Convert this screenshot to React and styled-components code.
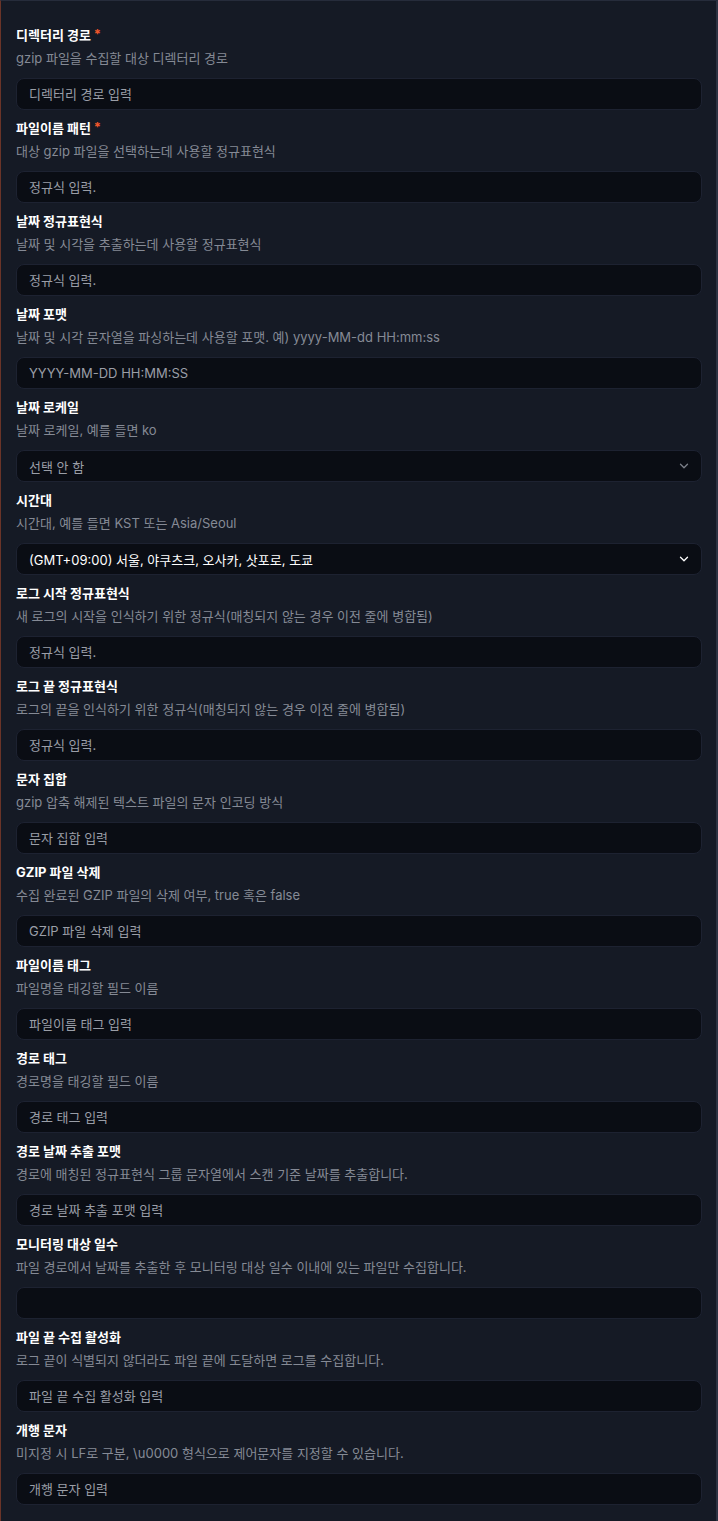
import { createGlobalStyle, styled } from "styled-components";
import { ChevronDown } from "lucide-react";

const fields = [
  { label: "디렉터리 경로", required: true, desc: "gzip 파일을 수집할 대상 디렉터리 경로", placeholder: "디렉터리 경로 입력" },
  { label: "파일이름 패턴", required: true, desc: "대상 gzip 파일을 선택하는데 사용할 정규표현식", placeholder: "정규식 입력." },
  { label: "날짜 정규표현식", desc: "날짜 및 시각을 추출하는데 사용할 정규표현식", placeholder: "정규식 입력." },
  { label: "날짜 포맷", desc: "날짜 및 시각 문자열을 파싱하는데 사용할 포맷. 예) yyyy-MM-dd HH:mm:ss", placeholder: "YYYY-MM-DD HH:MM:SS" },
  { label: "날짜 로케일", desc: "날짜 로케일, 예를 들면 ko", select: true, placeholder: "선택 안 함" },
  { label: "시간대", desc: "시간대, 예를 들면 KST 또는 Asia/Seoul", select: true, value: "(GMT+09:00) 서울, 야쿠츠크, 오사카, 삿포로, 도쿄" },
  { label: "로그 시작 정규표현식", desc: "새 로그의 시작을 인식하기 위한 정규식(매칭되지 않는 경우 이전 줄에 병합됨)", placeholder: "정규식 입력." },
  { label: "로그 끝 정규표현식", desc: "로그의 끝을 인식하기 위한 정규식(매칭되지 않는 경우 이전 줄에 병합됨)", placeholder: "정규식 입력." },
  { label: "문자 집합", desc: "gzip 압축 해제된 텍스트 파일의 문자 인코딩 방식", placeholder: "문자 집합 입력" },
  { label: "GZIP 파일 삭제", desc: "수집 완료된 GZIP 파일의 삭제 여부, true 혹은 false", placeholder: "GZIP 파일 삭제 입력" },
  { label: "파일이름 태그", desc: "파일명을 태깅할 필드 이름", placeholder: "파일이름 태그 입력" },
  { label: "경로 태그", desc: "경로명을 태깅할 필드 이름", placeholder: "경로 태그 입력" },
  { label: "경로 날짜 추출 포맷", desc: "경로에 매칭된 정규표현식 그룹 문자열에서 스캔 기준 날짜를 추출합니다.", placeholder: "경로 날짜 추출 포맷 입력" },
  { label: "모니터링 대상 일수", desc: "파일 경로에서 날짜를 추출한 후 모니터링 대상 일수 이내에 있는 파일만 수집합니다.", placeholder: "" },
  { label: "파일 끝 수집 활성화", desc: "로그 끝이 식별되지 않더라도 파일 끝에 도달하면 로그를 수집합니다.", placeholder: "파일 끝 수집 활성화 입력" },
  { label: "개행 문자", desc: "미지정 시 LF로 구분, \\u0000 형식으로 제어문자를 지정할 수 있습니다.", placeholder: "개행 문자 입력" },
];

export default function App() {
  return (
    <>
      <GlobalStyle />
      <Panel>
        {fields.map((f, i) => (
          <Field key={i}>
            <Label>
              {f.label}
              {f.required && <Star>*</Star>}
            </Label>
            <Desc>{f.desc}</Desc>
            {f.select ? (
              <Select $filled={!!f.value}>
                <span>{f.value || f.placeholder}</span>
                <ChevronDown size={14} strokeWidth={2.2} />
              </Select>
            ) : (
              <Input placeholder={f.placeholder} type="text" />
            )}
          </Field>
        ))}
      </Panel>
    </>
  );
}

const GlobalStyle = createGlobalStyle`
  body {
    margin: 0;
    background: #151a25;
    font-family: "Inter", "Noto Sans CJK KR", sans-serif;
  }
`;

const Panel = styled.div`
  box-sizing: border-box;
  width: 718px;
  min-height: 1521px;
  background: #151a25;
  border-top: 1px solid #262c3b;
  border-left: 1px solid #6a3428;
  border-right: 2px solid #2c3242;
  padding: 23px 14px 16px 15px;
  display: flex;
  flex-direction: column;
  gap: 7px;
`;

const Field = styled.div`
  display: flex;
  flex-direction: column;
`;

const Label = styled.div`
  display: flex;
  align-items: center;
  gap: 3px;
  height: 20px;
  font-size: 13px;
  font-weight: 700;
  color: #ffffff;
`;

const Star = styled.span`
  color: #f2572b;
  font-size: 13px;
  font-weight: 700;
`;

const Desc = styled.div`
  margin-top: 4px;
  height: 20px;
  line-height: 20px;
  font-size: 13px;
  color: #858a95;
`;

const Input = styled.input`
  box-sizing: border-box;
  margin-top: 10px;
  width: 100%;
  height: 32px;
  padding: 0 12px;
  background: #0a0d14;
  border: 1px solid #1d2231;
  border-radius: 8px;
  color: #ffffff;
  font-family: "Inter", "Noto Sans CJK KR", sans-serif;
  font-size: 13px;
  outline: none;
  &::placeholder {
    color: #9a9ea7;
  }
`;

const Select = styled.div`
  box-sizing: border-box;
  margin-top: 10px;
  height: 32px;
  padding: 0 10px 0 12px;
  display: flex;
  align-items: center;
  justify-content: space-between;
  background: #0a0d14;
  border: 1px solid #1d2231;
  border-radius: 8px;
  font-size: 13px;
  color: ${(p) => (p.$filled ? "#ffffff" : "#9a9ea7")};
  svg {
    color: ${(p) => (p.$filled ? "#ffffff" : "#7c808a")};
  }
`;
